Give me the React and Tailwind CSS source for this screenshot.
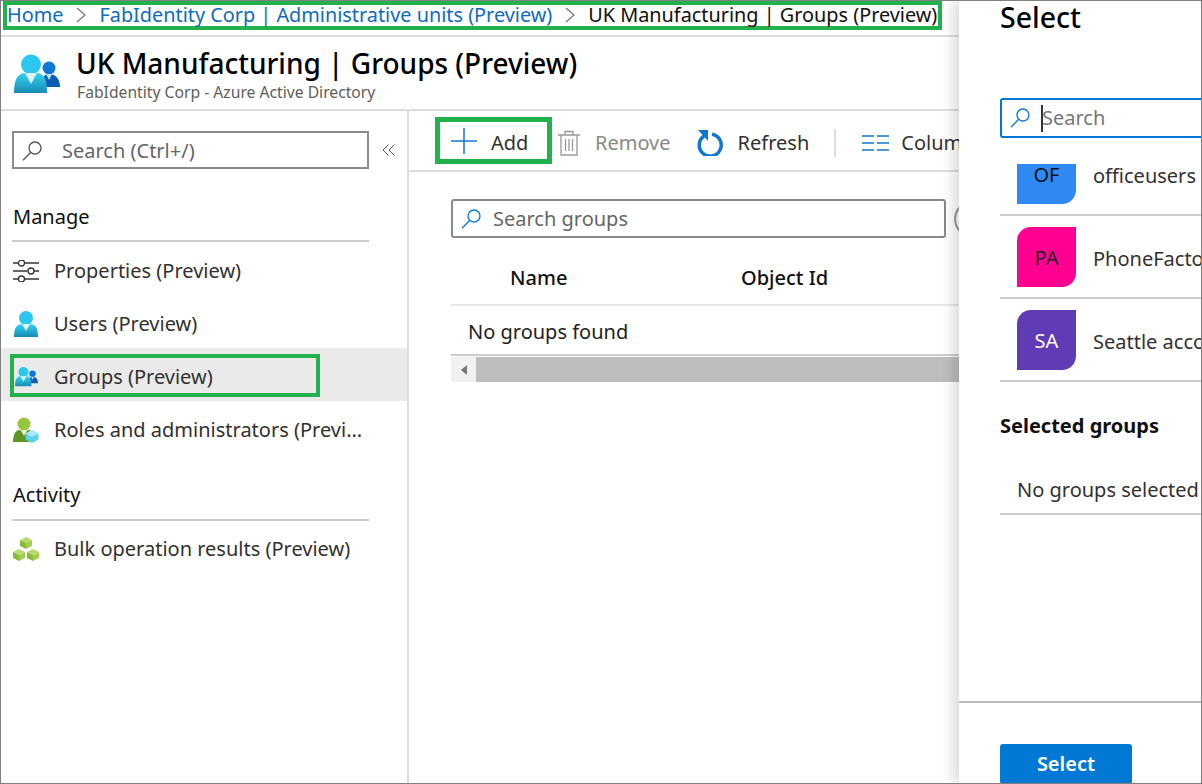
function Chevron() {
  return (
    <svg width="12" height="18" viewBox="0 0 12 18" className="shrink-0">
      <path d="M2 2l8 7-8 7" fill="none" stroke="#777" strokeWidth="1.2" />
    </svg>
  );
}

function Glass({ color = '#555' }) {
  return (
    <svg width="20" height="20" viewBox="0 0 20 20" className="shrink-0" fill="none" stroke={color} strokeWidth="1.3">
      <circle cx="13" cy="7" r="6" />
      <path d="M8.800 11.200L1 19.300" />
    </svg>
  );
}

function Person() {
  return (
    <svg width="24" height="26" viewBox="0 0 24 26" className="shrink-0">
      <defs>
        <linearGradient id="userBody" x1="0" y1="0" x2="0" y2="1">
          <stop offset="0" stopColor="#32d4f5" />
          <stop offset="1" stopColor="#198ab3" />
        </linearGradient>
      </defs>
      <circle cx="12" cy="7" r="7" fill="#2bc7ee" />
      <path d="M0 26c0-8 2-13 8-13h8c6 0 8 5 8 13z" fill="url(#userBody)" />
      <path d="M8 13h8l-4 7z" fill="#e8fafe" />
    </svg>
  );
}

function GroupIcon({ width = 46, height = 39, id }) {
  return (
    <svg width={width} height={height} viewBox="0 0 46 39" className="shrink-0">
      <defs>
        <linearGradient id={id} x1="0" y1="0" x2="0" y2="1">
          <stop offset="0" stopColor="#32d4f5" />
          <stop offset="1" stopColor="#198ab3" />
        </linearGradient>
      </defs>
      <circle cx="35" cy="14" r="6.500" fill="#0f78d4" />
      <path d="M28 33c0-8 1-13 7-13s11 4 11 13z" fill="#0a5fb0" />
      <path d="M32 20h6l-3 6z" fill="#bfe4fb" />
      <circle cx="17" cy="10.500" r="10" fill="#2bc7ee" />
      <path d="M0 39c0-14 4-20 11-20h12c7 0 10 6 10 20z" fill={`url(#${id})`} />
      <path d="M11 19h12l-6 11z" fill="#dff6fd" />
    </svg>
  );
}

function RolesIcon() {
  return (
    <svg width="26" height="26" viewBox="0 0 26 26" className="shrink-0">
      <circle cx="11" cy="7" r="6.500" fill="#95c63c" />
      <path d="M0 25c0-7 2-12 7-12h8c5 0 7 5 7 12z" fill="#5e9624" />
      <path d="M7.500 13h7L11 19z" fill="#e4f2c8" />
      <path d="M19 13l6.500 3.500v6L19 26l-6.500-3.500v-6z" fill="#5fd0f2" />
      <path d="M19 13l6.500 3.500L19 20l-6.500-3.500z" fill="#a6e9fa" />
    </svg>
  );
}

function Cube({ x, y }) {
  return (
    <g transform={`translate(${x} ${y})`}>
      <path d="M6 0l6 3-6 3-6-3z" fill="#b8dc6a" />
      <path d="M0 3l6 3v6l-6-3z" fill="#86bc3a" />
      <path d="M12 3l-6 3v6l6-3z" fill="#a4d052" />
    </g>
  );
}

function BulkIcon() {
  return (
    <svg width="26" height="26" viewBox="0 0 26 26" className="shrink-0">
      <Cube x={7} y={1} />
      <Cube x={0} y={13} />
      <Cube x={14} y={13} />
    </svg>
  );
}

function SlidersIcon() {
  return (
    <svg width="26" height="22" viewBox="0 0 26 22" className="shrink-0" fill="none" stroke="#333" strokeWidth="1.300">
      <path d="M0 3h5.500M11.500 3h14.500M0 11h14.500M21 11h5M0 19h5.500M11.500 19h14.500" />
      <circle cx="8.500" cy="3" r="3" />
      <circle cx="18" cy="11" r="3" />
      <circle cx="8.500" cy="19" r="3" />
    </svg>
  );
}

function NavRow({ icon, label, className = 'pt-[4px]' }) {
  return (
    <div className={`h-[53px] flex items-center pl-[12px] gap-[15px] text-[20px] text-[#323130] whitespace-nowrap ${className}`}>
      <div className="w-[26px] flex justify-center">{icon}</div>
      <span>{label}</span>
    </div>
  );
}

export default function App() {
  const rows = [
    { bg: 'bg-[#2e8af2]', text: 'text-[#111]', short: 'OF', name: 'officeusers' },
    { bg: 'bg-[#ff0090]', text: 'text-[#222]', short: 'PA', name: 'PhoneFactor' },
    { bg: 'bg-[#5f3bb5]', text: 'text-white', short: 'SA', name: 'Seattle accounts' },
  ];

  return (
    <div className="w-[1202px] h-[784px] flex overflow-hidden bg-white border border-[#808080] font-['Noto_Sans',sans-serif]">
      {/* page behind the panel */}
      <div className="w-[958px] shrink-0 flex flex-col overflow-hidden">
        <div className="h-[36px] shrink-0 border-b-2 border-[#ddd] pl-[2px]">
          <div className="w-[939px] h-[29px] pb-[2px] border-[4px] border-[#22b14c] flex items-center gap-[12px] text-[19.85px] text-[#0f6cbd] whitespace-nowrap">
            <span>Home</span>
            <Chevron />
            <span>FabIdentity Corp | Administrative units (Preview)</span>
            <Chevron />
            <span className="text-[#111]">UK Manufacturing | Groups (Preview)</span>
          </div>
        </div>

        <div className="h-[74px] shrink-0 border-b-2 border-[#ddd] flex items-center pl-[13px] gap-[16px]">
          <GroupIcon id="headerBody" />
          <div className="whitespace-nowrap">
            <div className="text-[28px] leading-[36px] pt-[1px] font-medium text-black">UK Manufacturing | Groups (Preview)</div>
            <div className="text-[15.7px] leading-[21px] mt-[1px] ml-[1px] text-[#605e5c]">FabIdentity Corp - Azure Active Directory</div>
          </div>
        </div>

        <div className="flex-1 flex min-h-0">
          {/* left nav */}
          <div className="w-[408px] shrink-0 border-r-2 border-[#ddd]">
            <div className="flex items-center pl-[11px] pt-[20px] gap-[13px]">
              <div className="w-[357px] h-[38px] pt-[1px] border-2 border-[#8a8a8a] flex items-center pl-[8px] gap-[20px] text-[20px] text-[#666]">
                <Glass />
                <span>Search (Ctrl+/)</span>
              </div>
              <svg width="13" height="12" viewBox="0 0 13 12" fill="none" stroke="#555" strokeWidth="1">
                <path d="M6.500 0.500L1 6l5.500 5.500M12.500 0.500L7 6l5.500 5.500" />
              </svg>
            </div>

            <div className="mt-[33px] pl-[12px] text-[20px] leading-[30px] text-[#111]">Manage</div>
            <div className="ml-[11px] w-[357px] mt-[8px] h-[2px] bg-[#ccc]" />
            <NavRow icon={<SlidersIcon />} label="Properties (Preview)" />
            <NavRow icon={<Person />} label="Users (Preview)" />
            <div className="h-[53px] pt-[1px] bg-[#ebeaea] flex items-center pl-[9px]">
              <div className="w-[310px] h-[43px] pt-[3px] border-[4px] border-[#22b14c] flex items-center pl-[1px] gap-[16px] text-[20px] text-[#323130] whitespace-nowrap">
                <GroupIcon width={23} height={21} id="navBody" />
                <span>Groups (Preview)</span>
              </div>
            </div>
            <NavRow icon={<RolesIcon />} label="Roles and administrators (Previ..." />

            <div className="mt-[26px] pl-[12px] text-[20px] leading-[30px] text-[#111]">Activity</div>
            <div className="ml-[11px] w-[357px] mt-[9px] h-[2px] bg-[#ccc]" />
            <NavRow icon={<BulkIcon />} label="Bulk operation results (Preview)" className="pt-[5px] -mt-[1px]" />
          </div>

          {/* content */}
          <div className="flex-1 min-w-0">
            <div className="h-[61px] border-b-2 border-[#ddd] pt-[4px] flex items-center pl-[26px] text-[20px] whitespace-nowrap">
              <div className="w-[117px] h-[47px] mt-[2px] shrink-0 self-start border-[5px] border-[#22b14c] flex items-center pl-[11px] gap-[14px] text-[#323130]">
                <svg width="26" height="26" viewBox="0 0 26 26" className="shrink-0" stroke="#0f78d4" strokeWidth="1.500">
                  <path d="M13 0v26M0 13h26" />
                </svg>
                <span className="pt-[4px]">Add</span>
              </div>
              <svg width="22" height="26" viewBox="0 0 22 26" className="ml-[6px] shrink-0" fill="none" stroke="#999" strokeWidth="1.300">
                <path d="M0 5h22M7 5V1.500h8V5M3 5v20h16V5M7.500 9v12M11 9v12M14.500 9v12" />
              </svg>
              <span className="ml-[15px] text-[#8a8886]">Remove</span>
              <svg width="27" height="26" viewBox="0 0 27 26" className="ml-[26px] shrink-0" fill="none">
                <path d="M7 6A11 11 0 1 0 15 4.200" stroke="#0f78d4" strokeWidth="3.500" />
                <path d="M1 0h10v11z" fill="#0f78d4" />
              </svg>
              <span className="ml-[14px] text-[#323130]">Refresh</span>
              <div className="ml-[25px] w-[2px] h-[28px] shrink-0 bg-[#ddd]" />
              <svg width="27" height="16" viewBox="0 0 27 16" className="ml-[26px] shrink-0" stroke="#0f78d4" strokeWidth="1.500">
                <path d="M0 1h12M15 1h12M0 8h12M15 8h12M0 15h12M15 15h12" />
              </svg>
              <span className="ml-[12px] text-[#323130]">Columns</span>
            </div>

            <div className="pl-[42px] pt-[27px]">
              <div className="flex items-center gap-[8px]">
                <div className="w-[495px] h-[39px] shrink-0 rounded-[3px] border-2 border-[#8a8a8a] flex items-center pl-[8px] gap-[12px] text-[20px] text-[#666]">
                  <Glass color="#0f78d4" />
                  <span>Search groups</span>
                </div>
                <div className="w-[36px] h-[36px] shrink-0 rounded-full border-2 border-[#999]" />
              </div>

              <div className="h-[68px] border-b-2 border-[#e6e6e6] flex items-center text-[20px] font-medium text-[#111] pt-[13px]">
                <span className="ml-[59px] w-[231px]">Name</span>
                <span>Object Id</span>
              </div>
              <div className="h-[50px] pt-[4px] border-b-2 border-[#ccc] flex items-center pl-[17px] text-[20px] text-[#222]">No groups found</div>
              <div className="h-[25px] mt-[1px] bg-[#f1f1f1] flex">
                <div className="w-[25px] flex items-center justify-center">
                  <div className="border-y-[5px] border-y-transparent border-r-[6px] border-r-[#777]" />
                </div>
                <div className="flex-1 bg-[#bdbdbd]" />
              </div>
            </div>
          </div>
        </div>
      </div>

      {/* select panel */}
      <div className="relative z-10 flex-1 min-w-0 overflow-hidden flex flex-col bg-white shadow-[-6px_0_12px_rgba(0,0,0,0.14)] whitespace-nowrap">
        <div className="pl-[41px] h-[32px] shrink-0 text-[28.5px] leading-[32px] text-black font-medium">Select</div>
        <div className="ml-[41px] mt-[65px] w-[240px] h-[40px] shrink-0 rounded-l-[3px] border-2 border-[#0078d4] flex items-center pl-[8px] text-[20px] text-[#777]">
          <Glass color="#0f78d4" />
          <span className="ml-[11px] w-[2px] h-[27px] bg-[#333] shrink-0" />
          <span className="-ml-[1px]">Search</span>
        </div>

        <div className="h-[218px] shrink-0 mt-[26px] overflow-hidden">
          <div className="-mt-[31px] ml-[41px] w-[240px]">
            {rows.map((row) => (
              <div key={row.short} className="h-[83px] border-b-2 border-[#ccc] flex items-center pl-[17px] gap-[17px] text-[20px] text-[#323130] pt-[1px]">
                <div className={`w-[59px] h-[60px] pt-[2px] shrink-0 rounded-tl-[14px] rounded-br-[14px] flex items-center justify-center ${row.bg} ${row.text}`}>
                  {row.short}
                </div>
                <span className="pt-[4px]">{row.name}</span>
              </div>
            ))}
          </div>
        </div>

        <div className="ml-[41px] mt-[31px] shrink-0 text-[20px] leading-[26px] font-bold text-[#111]">Selected groups</div>
        <div className="ml-[41px] mt-[31px] w-[240px] h-[45px] shrink-0 pt-[5px] border-b-2 border-[#ccc] pl-[17px] text-[20px] text-[#323130]">No groups selected</div>

        <div className="mt-[186px] h-[2px] shrink-0 bg-[#bbb]" />
        <div className="ml-[41px] mt-[41px] w-[132px] h-[40px] shrink-0 rounded-[3px] bg-[#0078d4] flex items-center justify-center text-[20px] font-semibold text-white">Select</div>
      </div>
    </div>
  );
}
